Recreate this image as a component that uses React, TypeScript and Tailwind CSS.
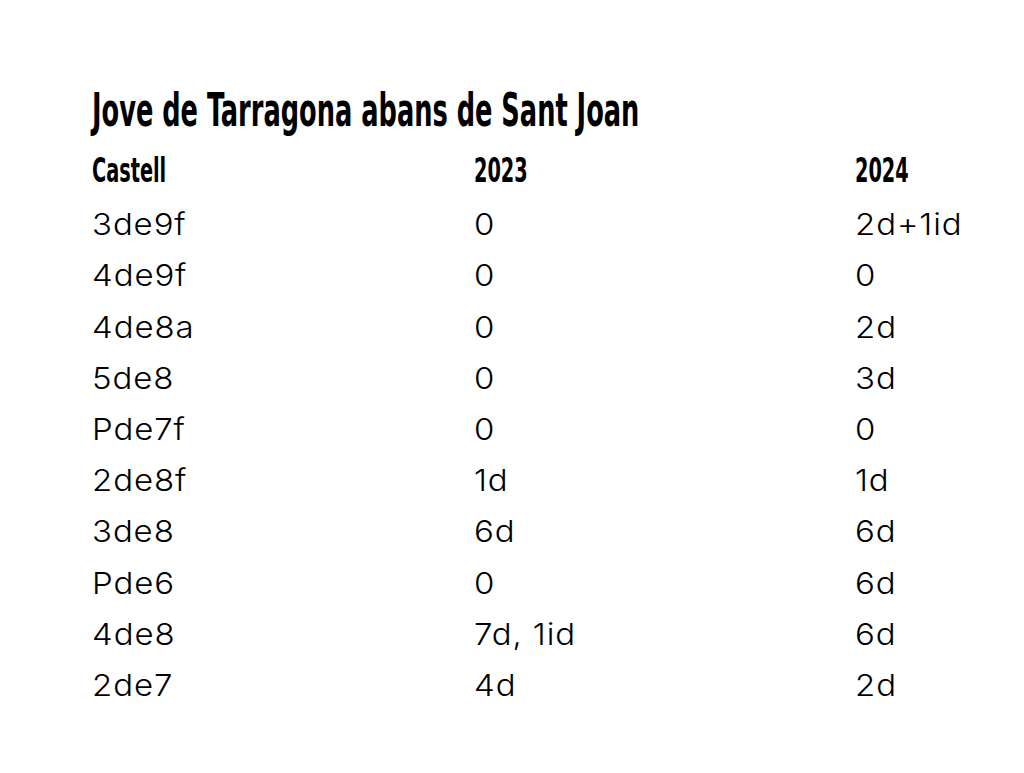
const rows: [string, string, string][] = [
  ["3de9f", "0", "2d+1id"],
  ["4de9f", "0", "0"],
  ["4de8a", "0", "2d"],
  ["5de8", "0", "3d"],
  ["Pde7f", "0", "0"],
  ["2de8f", "1d", "1d"],
  ["3de8", "6d", "6d"],
  ["Pde6", "0", "6d"],
  ["4de8", "7d, 1id", "6d"],
  ["2de7", "4d", "2d"],
];

const headers = ["Castell", "2023", "2024"];

export default function App() {
  return (
    <div className="w-[1024px] h-[773px] bg-white text-black pl-[92px] pt-[84px]">
      <h1 className="font-['DejaVu_Sans_Condensed',sans-serif] text-[46px] font-bold leading-[52px] h-[52px] origin-left scale-x-[0.62] whitespace-nowrap">
        Jove de Tarragona abans de Sant Joan
      </h1>
      <div className="grid grid-cols-[382px_381px_1fr] mt-[9px] font-['Inter',sans-serif] text-[30px] font-light leading-[51.2px]">
        {headers.map((h) => (
          <div
            key={h}
            className="font-['DejaVu_Sans_Condensed',sans-serif] text-[33px] font-bold h-[51.2px] origin-left scale-x-[0.65] whitespace-nowrap"
          >
            {h}
          </div>
        ))}
        {rows.map((r) =>
          r.map((c, i) => (
            <div
              key={r[0] + i}
              className="h-[51.2px] pt-[3px] tracking-[0.8px] origin-left scale-x-[1.1] whitespace-nowrap"
            >
              {c}
            </div>
          ))
        )}
      </div>
    </div>
  );
}
